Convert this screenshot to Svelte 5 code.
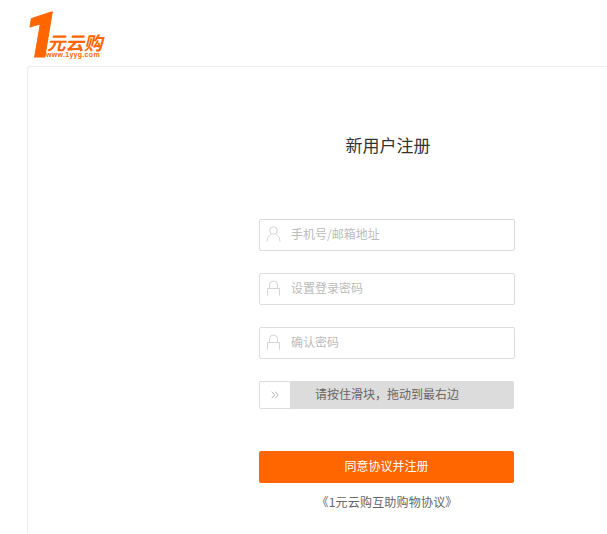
<script>
  const fields = [
    { label: '手机号/邮箱地址', icon: 'user' },
    { label: '设置登录密码', icon: 'lock' },
    { label: '确认密码', icon: 'lock' }
  ];
</script>

<div class="page">
  <header class="top">
    <svg class="logo" width="80" height="50" viewBox="0 0 80 50" aria-label="1元云购">
      <text x="-3" y="47.500" class="one">1</text>
      <text x="21" y="40.500" class="cn">元云购</text>
      <text x="20" y="48" class="url">www.1yyg.com</text>
    </svg>
  </header>
  <main class="panel">
    <h1>新用户注册</h1>
    <form class="form">
      {#each fields as f}
        <div class="field">
          {#if f.icon === 'user'}
            <svg class="ico" width="15" height="16" viewBox="0 0 15 16" fill="none" stroke="#d4d4d4" stroke-width="1">
              <circle cx="7.5" cy="4.500" r="3.800" />
              <path d="M1 15.500c0-4 2.500-6.500 4.200-7.200M14 15.500c0-4-2.500-6.500-4.200-7.200" />
            </svg>
          {:else}
            <svg class="ico" width="15" height="16" viewBox="0 0 15 16" fill="none" stroke="#d4d4d4" stroke-width="1">
              <path d="M1.500 15.500V8.500h12v7M3.500 8.500V5a4 4 0 0 1 8 0v3.500" />
            </svg>
          {/if}
          <span class="ph">{f.label}</span>
        </div>
      {/each}
      <div class="slider">
        <div class="handle">
          <svg width="8" height="8" viewBox="0 0 8 8" fill="none" stroke="#b4b4b4" stroke-width="1">
            <path d="M.7 .7l3 3.300-3 3.300M4.200 .7l3 3.300-3 3.300" />
          </svg>
        </div>
        <span class="hint">请按住滑块，拖动到最右边</span>
      </div>
      <button type="button" class="submit"><span class="submit-label">同意协议并注册</span></button>
      <a class="terms" href="#terms">《1元云购互助购物协议》</a>
    </form>
  </main>
</div>

<style>
  :global(body) {
    margin: 0;
    background: #fff;
  }
  .page {
    width: 607px;
    height: 534px;
    overflow: hidden;
    font-family: "Noto Sans CJK SC", "Liberation Sans", sans-serif;
  }
  .top {
    height: 66px;
    padding: 9px 0 0 26px;
    box-sizing: border-box;
  }
  .logo {
    display: block;
    overflow: visible;
  }
  .one {
    font: italic 900 63px Roboto, sans-serif;
    fill: #ff6600;
    stroke: #ff6600;
    stroke-width: 1px;
  }
  .cn {
    font: italic 700 18.500px "Noto Sans CJK SC", sans-serif;
    fill: #ff6600;
  }
  .url {
    font: 700 7px "Liberation Sans", sans-serif;
    fill: #ff6600;
    letter-spacing: 0.300px;
  }
  .panel {
    margin-left: 27px;
    height: 468px;
    border-left: 1px solid #ececec;
    border-top: 1px solid #ececec;
    border-top-left-radius: 4px;
    padding-left: 231px;
    box-sizing: border-box;
  }
  h1 {
    margin: 0;
    padding-top: 66px;
    width: 258px;
    text-align: center;
    font-size: 17px;
    line-height: 24px;
    font-weight: 400;
    color: #333;
  }
  .form {
    margin-top: 62px;
    width: 256px;
    display: flex;
    flex-direction: column;
  }
  .field {
    height: 32px;
    box-sizing: border-box;
    border: 1px solid #dcdcdc;
    border-radius: 2px;
    margin-bottom: 22px;
    padding-left: 6px;
    display: flex;
    align-items: center;
  }
  .ico {
    margin-top: -3px;
    flex: none;
  }
  .ph {
    margin-left: 10px;
    padding-bottom: 3px;
    font-size: 12px;
    color: #bbb;
  }
  .slider {
    height: 28px;
    width: 255px;
    background: #dcdcdc;
    border-radius: 2px;
    display: flex;
    align-items: center;
  }
  .handle {
    width: 32px;
    height: 28px;
    box-sizing: border-box;
    background: #fff;
    border: 1px solid #dcdcdc;
    border-radius: 2px 0 0 2px;
    display: flex;
    align-items: center;
    justify-content: center;
  }
  .hint {
    margin-left: 24px;
    padding-bottom: 3px;
    font-size: 12px;
    color: #666;
  }
  .submit {
    margin-top: 42px;
    width: 255px;
    height: 32px;
    border: 0;
    border-radius: 2px;
    background: #ff6600;
    color: #fff;
    font: 12px "Noto Sans CJK SC", sans-serif;
    padding: 0;
  }
  .submit-label {
    display: block;
    padding-bottom: 3px;
  }
  .terms {
    margin-top: 10px;
    width: 256px;
    text-align: center;
    font-size: 12px;
    line-height: 18px;
    letter-spacing: 0.200px;
    color: #666;
    text-decoration: none;
  }
</style>
